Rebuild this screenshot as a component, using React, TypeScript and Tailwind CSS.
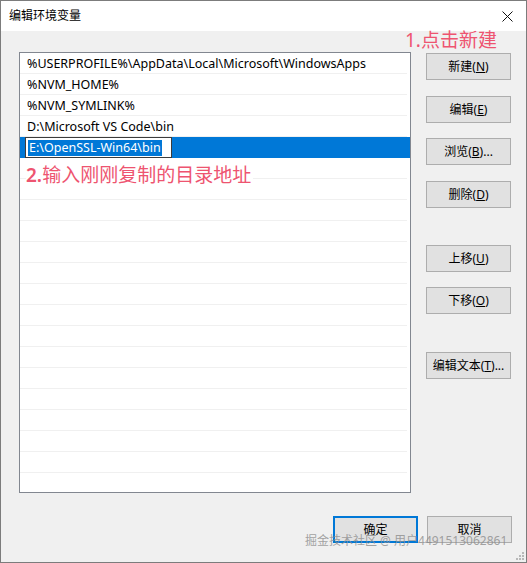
const paths = [
  "%USERPROFILE%\\AppData\\Local\\Microsoft\\WindowsApps",
  "%NVM_HOME%",
  "%NVM_SYMLINK%",
  "D:\\Microsoft VS Code\\bin",
];

const font = { fontFamily: '"Noto Sans", "Noto Sans CJK SC", sans-serif' };

const Btn = ({ label, hot, rest = ")", className = "", primary = false }: { label: string; hot: string; rest?: string; className?: string; primary?: boolean }) => (
  <button
    className={`h-[27px] w-[85px] bg-[#e1e1e1] text-[12px] text-black flex items-center justify-center ${primary ? "border-2 border-[#0078d7]" : "border border-[#adadad]"} ${className}`}
  >
    {label}
    {hot ? (
      <>
        (<span className="underline">{hot}</span>
        {rest}
      </>
    ) : null}
  </button>
);

export default function App() {
  const rows = Array.from({ length: 21 });
  return (
    <div className="w-[527px] h-[563px] border border-[#7c7c7c] flex flex-col relative overflow-hidden" style={font}>
      <div className="h-[30px] bg-white flex items-center justify-between pl-[8px] pr-[13px] shrink-0">
        <span className="text-[12px] text-black">编辑环境变量</span>
        <svg width="11" height="11" viewBox="0 0 11 11" className="mt-[1px]">
          <path d="M0.5 0.5 L10.5 10.5 M10.5 0.5 L0.5 10.5" stroke="#111" strokeWidth="1" />
        </svg>
      </div>
      <div className="flex-1 bg-[#f0f0f0] relative flex flex-col">
        <div className="flex pt-[21px] pl-[18px]">
          <div className="w-[392px] h-[441px] border border-[#828790] bg-white overflow-hidden">
            {rows.map((_, i) => {
              if (i === 4) {
                return (
                  <div key={i} className="h-[21px] bg-[#0078d7] flex items-center pl-[5px]">
                    <div className="h-[21px] w-[147px] bg-white border border-[#3c3c3c] flex items-center pl-[2px] pt-[1px]">
                      <span className="bg-[#0078d7] text-white text-[12.5px] leading-[16px] px-[1px]">E:\OpenSSL-Win64\bin</span>
                    </div>
                  </div>
                );
              }
              return (
                <div key={i} className="h-[21px] border-b border-[#f0f0f0] mr-[3px] flex items-center pl-[7px] pt-[2px] text-[12.5px] text-black">
                  {paths[i] ?? ""}
                </div>
              );
            })}
          </div>
          <div className="flex flex-col ml-[15px] pt-[1px]">
            <Btn label="新建" hot="N" />
            <Btn label="编辑" hot="E" className="mt-[16px]" />
            <Btn label="浏览" hot="B" rest=")..." className="mt-[15px]" />
            <Btn label="删除" hot="D" className="mt-[16px]" />
            <Btn label="上移" hot="U" className="mt-[37px]" />
            <Btn label="下移" hot="O" className="mt-[15px]" />
            <Btn label="编辑文本" hot="T" rest=")..." className="mt-[38px]" />
          </div>
        </div>
        <div className="flex justify-end gap-[9px] pr-[14px] mt-[23px]">
          <Btn label="确定" hot="" primary />
          <Btn label="取消" hot="" />
        </div>
        <span className="absolute left-[404px] top-[-3px] text-[19px] leading-[24px] text-[#ee5470]">1.点击新建</span>
        <span className="absolute left-[25px] top-[132px] text-[19px] leading-[24px] text-[#ee5470] bg-white pr-[2px]">
          <span className="font-semibold">2.</span>输入刚刚复制的目录地址
        </span>
        <span className="absolute left-[304px] top-[501px] text-[12px] leading-[18px] text-[#8c8c8c]/80 whitespace-nowrap">
          掘金技术社区 @ 用户4491513062861
        </span>
        <svg width="8" height="8" viewBox="0 0 8 8" className="absolute right-[2px] bottom-[2px]">
          <rect x="6" y="0" width="2" height="2" fill="#b8b8b8" />
          <rect x="3" y="3" width="2" height="2" fill="#b8b8b8" />
          <rect x="6" y="3" width="2" height="2" fill="#b8b8b8" />
          <rect x="0" y="6" width="2" height="2" fill="#b8b8b8" />
          <rect x="3" y="6" width="2" height="2" fill="#b8b8b8" />
          <rect x="6" y="6" width="2" height="2" fill="#b8b8b8" />
        </svg>
      </div>
    </div>
  );
}
